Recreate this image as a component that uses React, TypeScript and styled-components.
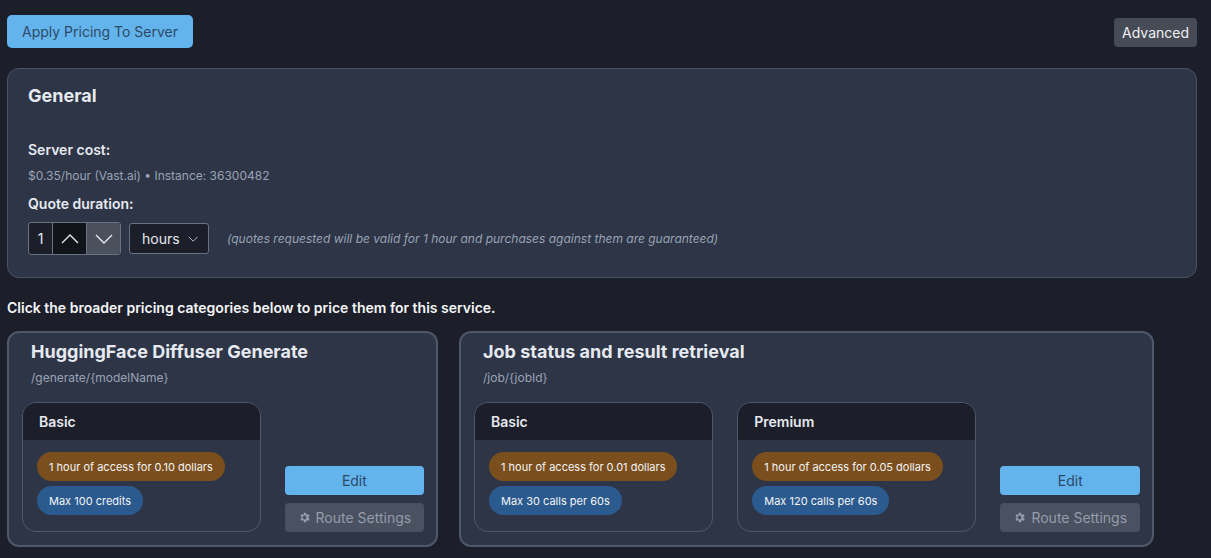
import styled, { createGlobalStyle } from 'styled-components';

const GlobalStyle = createGlobalStyle`
  html, body {
    margin: 0;
    background: #1c1f2a;
    font-family: Inter, 'Noto Sans', sans-serif;
    color: #e6e9ef;
  }
`;

type Tier = { name: string; access: string; limit: string };
type Route = { title: string; path: string; tiers: Tier[]; width: number };

const routes: Route[] = [
  {
    title: 'HuggingFace Diffuser Generate',
    path: '/generate/{modelName}',
    width: 431,
    tiers: [{ name: 'Basic', access: '1 hour of access for 0.10 dollars', limit: 'Max 100 credits' }],
  },
  {
    title: 'Job status and result retrieval',
    path: '/job/{jobId}',
    width: 695,
    tiers: [
      { name: 'Basic', access: '1 hour of access for 0.01 dollars', limit: 'Max 30 calls per 60s' },
      { name: 'Premium', access: '1 hour of access for 0.05 dollars', limit: 'Max 120 calls per 60s' },
    ],
  },
];

const Gear = () => (
  <svg width="13" height="13" viewBox="0 0 24 24" fill="currentColor">
    <path d="M19.4 13a7.5 7.5 0 0 0 0-2l2.1-1.6-2-3.5-2.5 1a7.6 7.6 0 0 0-1.7-1L15 3.2h-4l-.4 2.7a7.6 7.6 0 0 0-1.7 1l-2.5-1-2 3.5L6.6 11a7.5 7.5 0 0 0 0 2l-2.1 1.6 2 3.5 2.5-1a7.6 7.6 0 0 0 1.7 1l.4 2.7h4l.4-2.7a7.6 7.6 0 0 0 1.7-1l2.5 1 2-3.5zM12 15.5a3.5 3.5 0 1 1 0-7 3.5 3.5 0 0 1 0 7z" />
  </svg>
);

const Chevron = ({ up }: { up?: boolean }) => (
  <svg width="18" height="10" viewBox="0 0 18 10" fill="none" stroke="#e6e9ef" strokeWidth="1.4">
    <path d={up ? 'M1 9l8-8 8 8' : 'M1 1l8 8 8-8'} />
  </svg>
);

export default function App() {
  return (
    <Page>
      <GlobalStyle />
      <TopBar>
        <ApplyButton>Apply Pricing To Server</ApplyButton>
        <AdvancedButton>Advanced</AdvancedButton>
      </TopBar>
      <GeneralPanel>
        <PanelTitle>General</PanelTitle>
        <Label>Server cost:</Label>
        <Muted>$0.35/hour (Vast.ai) • Instance: 36300482</Muted>
        <Label>Quote duration:</Label>
        <Controls>
          <Stepper>
            <StepValue>1</StepValue>
            <StepButton $tone="#11141b"><Chevron up /></StepButton>
            <StepButton $tone="#4a505c"><Chevron /></StepButton>
          </Stepper>
          <Select>
            hours
            <svg width="14" height="8" viewBox="0 0 14 8" fill="none" stroke="#c9ced8" strokeWidth="1.2">
              <path d="M1 1l6 6 6-6" />
            </svg>
          </Select>
          <Hint>(quotes requested will be valid for 1 hour and purchases against them are guaranteed)</Hint>
        </Controls>
      </GeneralPanel>
      <Intro>Click the broader pricing categories below to price them for this service.</Intro>
      <Cards>
        {routes.map((r) => (
          <Card key={r.path} style={{ width: r.width }}>
            <CardTitle>{r.title}</CardTitle>
            <CardPath>{r.path}</CardPath>
            <CardBody>
              {r.tiers.map((t) => (
                <TierBox key={t.name}>
                  <TierHead>{t.name}</TierHead>
                  <TierPills>
                    <Pill $bg="#7b4f1d">{t.access}</Pill>
                    <Pill $bg="#2b5a8e">{t.limit}</Pill>
                  </TierPills>
                </TierBox>
              ))}
              <Actions>
                <EditButton>Edit</EditButton>
                <RouteButton><Gear /> Route Settings</RouteButton>
              </Actions>
            </CardBody>
          </Card>
        ))}
      </Cards>
    </Page>
  );
}

const Page = styled.div`
  padding: 15px 14px 0 7px;
`;

const TopBar = styled.div`
  display: flex;
  justify-content: space-between;
  align-items: flex-start;
`;

const ApplyButton = styled.button`
  height: 33px;
  padding: 0 15px;
  border: none;
  border-radius: 5px;
  background: #63b3ed;
  color: #2d4a66;
  font-family: inherit;
  font-size: 14px;
`;

const AdvancedButton = styled.button`
  margin-top: 3px;
  height: 29px;
  padding: 0 8px;
  border: none;
  border-radius: 4px;
  background: #474b55;
  color: #eef0f4;
  font-family: inherit;
  font-size: 14px;
`;

const GeneralPanel = styled.div`
  margin-top: 20px;
  height: 210px;
  box-sizing: border-box;
  padding: 16px 20px;
  background: #2d3547;
  border: 1px solid #4a5366;
  border-radius: 12px;
`;

const PanelTitle = styled.div`
  font-size: 18px;
  font-weight: 700;
  margin-bottom: 35px;
`;

const Label = styled.div`
  font-size: 14px;
  font-weight: 600;
  margin-bottom: 10px;
`;

const Muted = styled.div`
  font-size: 12px;
  color: #9aa3b3;
  margin-bottom: 12px;
`;

const Controls = styled.div`
  display: flex;
  align-items: center;
  gap: 8px;
`;

const Stepper = styled.div`
  display: flex;
  height: 31px;
  border: 1px solid #6b7280;
  border-radius: 3px;
  overflow: hidden;
  background: #1c1f2a;
`;

const StepValue = styled.div`
  width: 23px;
  display: flex;
  align-items: center;
  justify-content: center;
  font-size: 14px;
`;

const StepButton = styled.div<{ $tone: string }>`
  width: 33px;
  display: flex;
  align-items: center;
  justify-content: center;
  background: ${(p) => p.$tone};
  border-left: 1px solid #6b7280;
`;

const Select = styled.div`
  height: 31px;
  box-sizing: border-box;
  padding: 0 10px 0 12px;
  display: flex;
  align-items: center;
  gap: 8px;
  border: 1px solid #6b7280;
  border-radius: 3px;
  background: #1c1f2a;
  font-size: 14px;
  width: 80px;
`;

const Hint = styled.div`
  margin-left: 10px;
  font-size: 12px;
  font-style: italic;
  color: #9aa3b3;
`;

const Intro = styled.div`
  margin-top: 21px;
  font-size: 14px;
  font-weight: 600;
  color: #f4f5f7;
`;

const Cards = styled.div`
  display: flex;
  gap: 21px;
  margin-top: 15px;
`;

const Card = styled.div`
  height: 216px;
  box-sizing: border-box;
  padding: 8px 12px 12px 13px;
  background: #2d3547;
  border: 2px solid #4f5869;
  border-radius: 12px;
`;

const CardTitle = styled.div`
  padding-left: 9px;
  font-size: 18px;
  font-weight: 700;
`;

const CardPath = styled.div`
  padding-left: 9px;
  margin-top: 8px;
  font-size: 12px;
  color: #9aa3b3;
`;

const CardBody = styled.div`
  display: flex;
  gap: 24px;
  margin-top: 17px;
`;

const TierBox = styled.div`
  width: 240px;
  height: 130px;
  box-sizing: border-box;
  border: 1px solid #4f5869;
  border-radius: 14px;
  overflow: hidden;
`;

const TierHead = styled.div`
  height: 37px;
  display: flex;
  align-items: center;
  padding-left: 16px;
  background: #1c1f2a;
  font-size: 14px;
  font-weight: 600;
`;

const TierPills = styled.div`
  display: flex;
  flex-direction: column;
  align-items: flex-start;
  gap: 5px;
  padding: 12px 14px;
`;

const Pill = styled.div<{ $bg: string }>`
  height: 29px;
  display: flex;
  align-items: center;
  padding: 0 12px;
  border-radius: 15px;
  background: ${(p) => p.$bg};
  font-size: 11px;
  color: #f3f4f6;
`;

const Actions = styled.div`
  margin-left: auto;
  display: flex;
  flex-direction: column;
  justify-content: flex-end;
  gap: 8px;
  width: 140px;
  padding-top: 63px;
`;

const EditButton = styled.button`
  height: 29px;
  border: none;
  border-radius: 4px;
  background: #63b3ed;
  color: #2d4a66;
  font-family: inherit;
  font-size: 14px;
`;

const RouteButton = styled.button`
  height: 29px;
  border: none;
  border-radius: 4px;
  background: #4a5160;
  color: #959cab;
  font-family: inherit;
  font-size: 14px;
  display: flex;
  align-items: center;
  justify-content: center;
  gap: 5px;
`;
